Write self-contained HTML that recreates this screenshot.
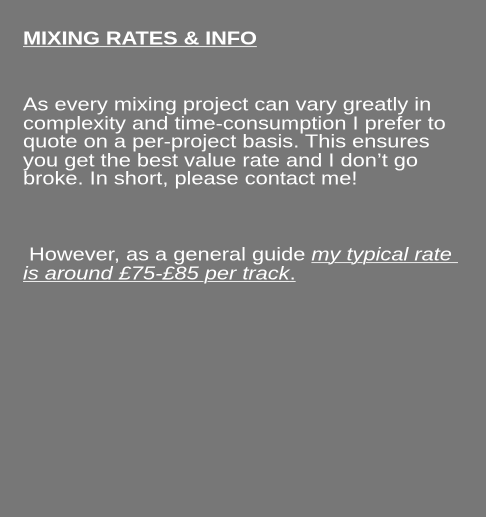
<!DOCTYPE html>
<html><head><style>
html,body{margin:0;padding:0;}
body{width:486px;height:517px;background:#777777;color:#fff;font-family:"Liberation Sans",Arial,sans-serif;font-size:21.8px;overflow:hidden;position:relative;}
.l{position:absolute;left:23px;white-space:nowrap;line-height:21.5px;letter-spacing:0px;transform:scaleY(0.86);transform-origin:0 0;}
u{text-decoration:underline;text-decoration-thickness:1px;text-underline-offset:2px;}
</style></head><body>
<div class="l" style="top:29px;font-weight:bold;letter-spacing:-0.1px"><u>MIXING RATES &amp; INFO</u></div>
<div class="l" style="top:95px">As every mixing project can vary greatly in<br>complexity and time-consumption I prefer to<br>quote on a per-project basis. This ensures<br>you get the best value rate and I don’t go<br>broke. In short, please contact me!</div>
<div class="l" style="top:245px">&nbsp;However, as a general guide <u><i>my typical rate&nbsp;</i></u><br><u><i>is around £75-£85 per track</i>.</u></div>
</body></html>
